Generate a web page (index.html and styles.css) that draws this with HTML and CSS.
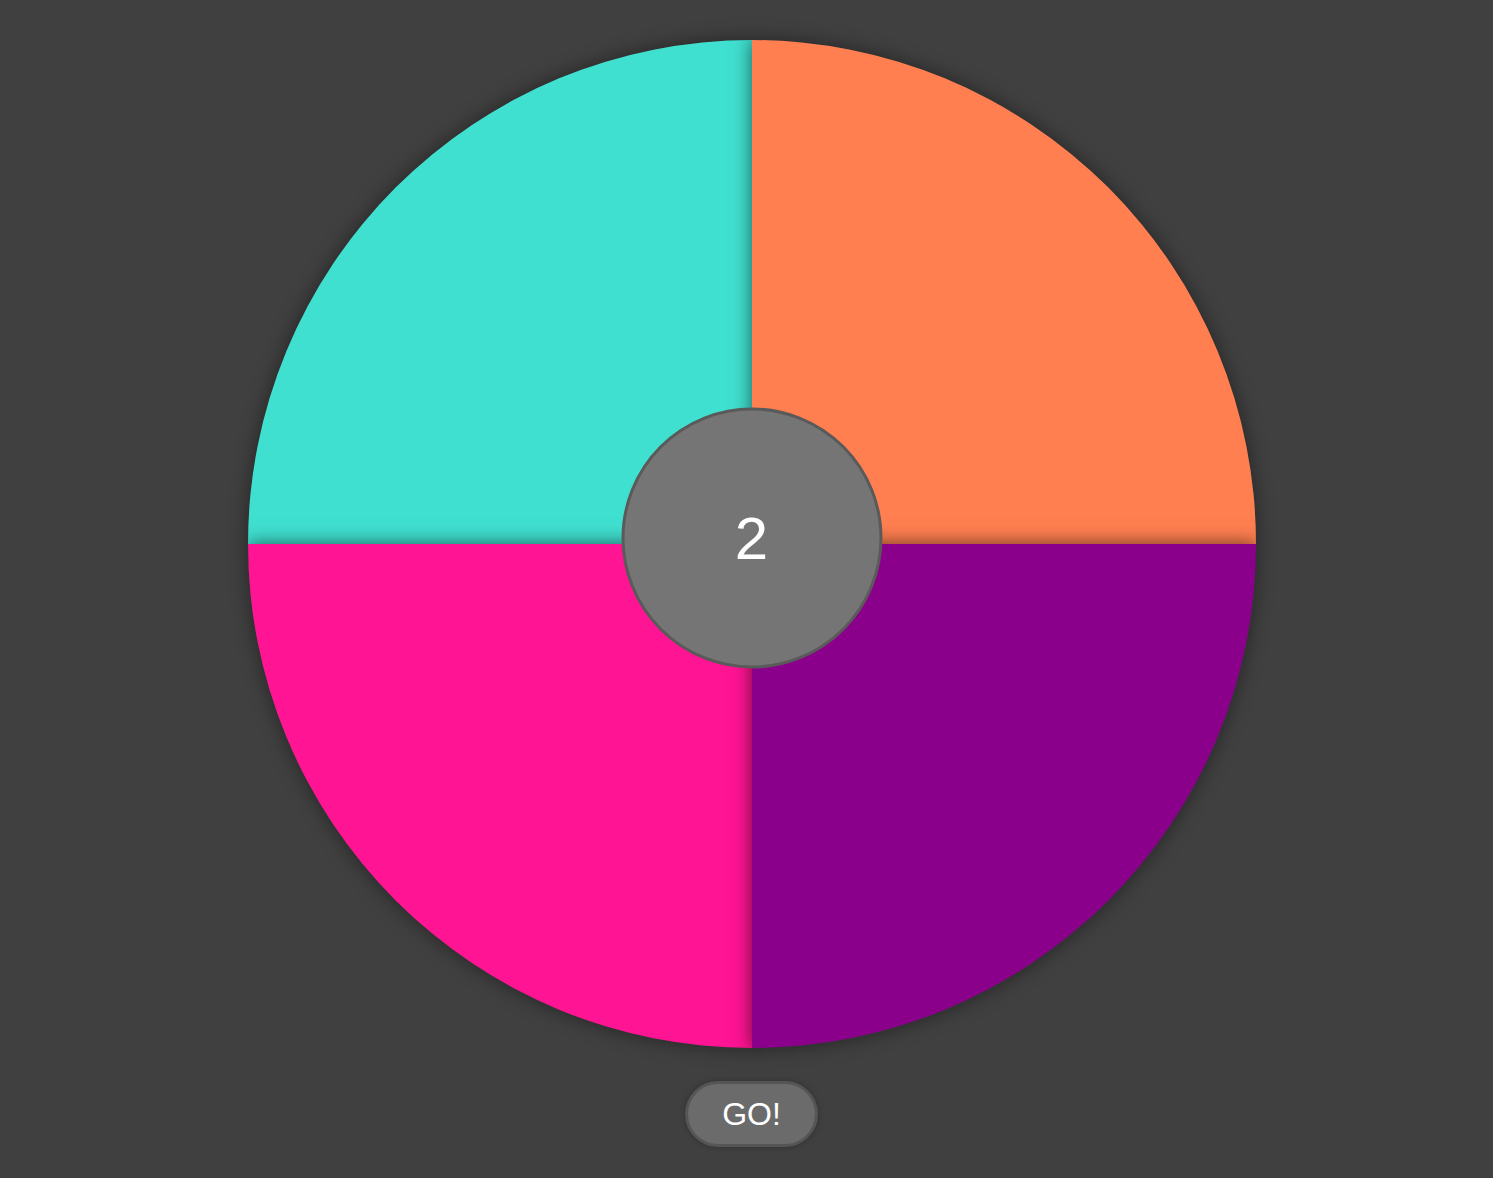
FILE: index.html
```html
<!DOCTYPE html>
<html lang="en">
<head>
<meta charset="utf-8">
<title>Wheel</title>
<link rel="stylesheet" href="styles.css">
</head>
<body>
<main class="stage">
  <div class="wheel">
    <div class="slice slice-teal"></div>
    <div class="slice slice-coral"></div>
    <div class="slice slice-pink"></div>
    <div class="slice slice-purple"></div>
    <div class="hub">2</div>
  </div>
  <button class="go">GO!</button>
</main>
</body>
</html>
```

FILE: styles.css
```css
html, body {
  margin: 0;
  padding: 0;
  background: #404040;
  height: 100%;
  overflow: hidden;
}

.stage {
  display: flex;
  flex-direction: column;
  align-items: center;
  padding: 40px 0 0 10px;
  gap: 33px;
  font-family: "Liberation Sans", Arial, sans-serif;
}

.wheel {
  position: relative;
  width: 1008px;
  height: 1008px;
  border-radius: 50%;
  overflow: hidden;
  display: grid;
  grid-template-columns: 1fr 1fr;
  grid-template-rows: 1fr 1fr;
  box-shadow: 0 0 20px rgba(0, 0, 0, 0.45);
}

.slice {
  position: relative;
  box-shadow: 0 0 18px rgba(0, 0, 0, 0.6);
}

.slice-teal { background: #40e0d0; }
.slice-coral { background: #ff7f50; }
.slice-pink { background: #ff1493; }
.slice-purple { background: #8b008b; }

.hub {
  position: absolute;
  left: 50%;
  top: 50%;
  width: 255px;
  height: 255px;
  box-sizing: content-box;
  transform: translate(-50%, calc(-50% - 6px));
  border-radius: 50%;
  background: #757575;
  border: 3px solid #5a5a5a;
  display: flex;
  align-items: center;
  justify-content: center;
  color: #ffffff;
  font-size: 60px;
  line-height: 1;
  padding-bottom: 0;
  z-index: 2;
}

.go {
  width: 133px;
  height: 66px;
  border-radius: 33px;
  background: #6b6b6b;
  border: 3px solid #555555;
  color: #ffffff;
  font-family: "Liberation Sans", Arial, sans-serif;
  font-size: 32px;
  padding: 0;
  box-shadow: 0 0 6px rgba(0, 0, 0, 0.25);
}
```
